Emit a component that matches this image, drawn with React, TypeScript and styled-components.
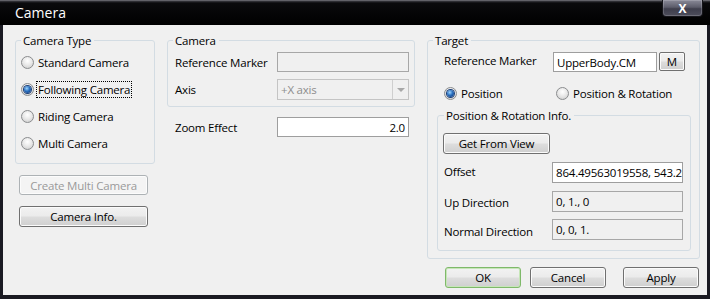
import React from 'react';
import styled, { createGlobalStyle, css } from 'styled-components';

const Global = createGlobalStyle`
  html, body { margin: 0; padding: 0; background: #16161c; }
  body { font-family: "Open Sans", "Noto Sans", sans-serif; font-size: 11.5px; letter-spacing: -0.2px; color: #000; }
  * { box-sizing: border-box; }
`;

const Window = styled.div`
  width: 710px;
  height: 299px;
  background: #1a1a22;
  display: flex;
  flex-direction: column;
  overflow: hidden;
`;

const TitleBar = styled.div`
  height: 25px;
  flex: none;
  display: flex;
  align-items: flex-start;
  justify-content: space-between;
  padding: 0 7px 0 15px;
  background: linear-gradient(#8a8a90 0, #3a3a40 1px, #0a0a0c 3px, #000 100%);
`;

const Title = styled.span`
  color: #fff;
  font-size: 14px;
  letter-spacing: 0;
  line-height: 16px;
  margin-top: 5px;
`;

const CloseBtn = styled.div`
  width: 41px;
  height: 17px;
  border: 1px solid #15151a;
  border-top: none;
  border-radius: 0 0 4px 4px;
  background: linear-gradient(#8a8a98 0%, #5c5c6a 45%, #3e3e4c 55%, #4e4e5c 100%);
  box-shadow: inset 0 0 0 1px rgba(255, 255, 255, 0.18);
  color: #fff;
  font-weight: bold;
  font-size: 12px;
  line-height: 15px;
  display: flex;
  align-items: center;
  justify-content: center;
`;

const Client = styled.div`
  flex: 1;
  margin: 0 3px 4px 3px;
  background: #f0f0f0;
  display: flex;
  align-items: flex-start;
  gap: 12px;
  padding: 8px 7px 0 12px;
`;

const Column = styled.div<{ $w: number }>`
  width: ${(p) => p.$w}px;
  flex: none;
  display: flex;
  flex-direction: column;
`;

const Group = styled.fieldset<{ $w: number; $h: number; $pl?: number; $pt?: number }>`
  width: ${(p) => p.$w}px;
  height: ${(p) => p.$h}px;
  margin: 0;
  padding: ${(p) => p.$pt ?? 0}px 5px 0 ${(p) => p.$pl ?? 7}px;
  border: 1px solid #d3dce3;
  border-radius: 3px;
  min-inline-size: 0;
  display: flex;
  flex-direction: column;
`;

const Legend = styled.legend<{ $ml?: number }>`
  padding: 0 3px 0 2px;
  margin-left: ${(p) => p.$ml ?? 0}px;
  line-height: 15px;
`;

const RadioRow = styled.label<{ $h?: number; $w?: number }>`
  height: ${(p) => p.$h ?? 27}px;
  ${(p) => (p.$w ? `width: ${p.$w}px;` : '')}
  display: flex;
  align-items: center;
  gap: 3px;
  white-space: nowrap;
  flex: none;
`;

const RadioCircle = styled.span<{ $on?: boolean }>`
  width: 13px;
  height: 13px;
  flex: none;
  border-radius: 50%;
  border: 1px solid #8a8c8e;
  background: radial-gradient(circle at 50% 35%, #ffffff 0%, #eaeaea 45%, #c9c9c9 100%);
  display: flex;
  align-items: center;
  justify-content: center;
  ${(p) =>
    p.$on &&
    css`
      &::after {
        content: '';
        width: 7px;
        height: 7px;
        border-radius: 50%;
        background: radial-gradient(circle at 40% 35%, #9fd6ff 0%, #2a70c0 45%, #0a2f6e 100%);
        box-shadow: 0 0 0 1px #1b3f78;
      }
    `}
`;

const RadioText = styled.span<{ $focus?: boolean }>`
  padding: 0 1px;
  ${(p) =>
    p.$focus &&
    css`
      outline: 1px dotted #000;
      outline-offset: 0;
    `}
`;

const Button = styled.button<{ $w: number; $h?: number; $mt?: number; $ml?: number; $default?: boolean }>`
  width: ${(p) => p.$w}px;
  height: ${(p) => p.$h ?? 21}px;
  margin: ${(p) => p.$mt ?? 0}px 0 0 ${(p) => p.$ml ?? 0}px;
  padding: 0;
  font-family: inherit;
  font-size: 11.5px;
  letter-spacing: -0.2px;
  color: #000;
  border: 1px solid ${(p) => (p.$default ? '#7fb96a' : '#707070')};
  border-radius: 3px;
  background: linear-gradient(#f2f2f2 0%, #ebebeb 48%, #dddddd 52%, #cfcfcf 100%);
  box-shadow: inset 0 0 0 1px ${(p) => (p.$default ? '#c6e6b8' : '#fbfbfb')};
  flex: none;
  &:disabled {
    color: #9a9a9a;
    border-color: #adb2b5;
    background: #f4f4f4;
    box-shadow: inset 0 0 0 1px #fcfcfc;
  }
`;

const FieldRow = styled.div<{ $mt?: number; $h?: number; $pl?: number }>`
  display: flex;
  align-items: center;
  height: ${(p) => p.$h ?? 20}px;
  margin-top: ${(p) => p.$mt ?? 0}px;
  padding-left: ${(p) => p.$pl ?? 0}px;
  flex: none;
`;

const Label = styled.span<{ $w: number; $dy?: number }>`
  width: ${(p) => p.$w}px;
  flex: none;
  white-space: nowrap;
  position: relative;
  top: ${(p) => p.$dy ?? 0}px;
`;

const TextBox = styled.div<{ $w: number; $ro?: boolean; $right?: boolean }>`
  width: ${(p) => p.$w}px;
  height: 100%;
  border: 1px solid ${(p) => (p.$ro ? '#a7a7a7' : '#9e9e9e')};
  background: ${(p) => (p.$ro ? '#f0f0f0' : '#fff')};
  padding: 0 3px;
  display: flex;
  align-items: center;
  justify-content: ${(p) => (p.$right ? 'flex-end' : 'flex-start')};
  white-space: nowrap;
  overflow: hidden;
  flex: none;
`;

const Select = styled.div<{ $w: number }>`
  width: ${(p) => p.$w}px;
  height: 100%;
  border: 1px solid #c4c4c4;
  background: #f0f0f0;
  display: flex;
  color: #8d8d8d;
  flex: none;
`;

const SelectText = styled.span`
  flex: 1;
  padding-left: 3px;
  display: flex;
  align-items: center;
`;

const SelectArrow = styled.span`
  width: 16px;
  border-left: 1px solid #cfcfcf;
  display: flex;
  align-items: center;
  justify-content: center;
  &::after {
    content: '';
    border-left: 4px solid transparent;
    border-right: 4px solid transparent;
    border-top: 4px solid #a8a8a8;
  }
`;

const SmallBtn = styled.button`
  width: 26px;
  height: 19px;
  margin-left: 2px;
  align-self: flex-start;
  padding: 0;
  font-family: inherit;
  font-size: 11.5px;
  border: 1px solid #707070;
  border-radius: 2px;
  background: linear-gradient(#f2f2f2 0%, #ebebeb 48%, #dddddd 52%, #cfcfcf 100%);
  box-shadow: inset 0 0 0 1px #fbfbfb;
`;

const ButtonRow = styled.div`
  display: flex;
  margin-top: 8px;
  padding-left: 18px;
`;

const InnerGroup = styled.fieldset`
  width: 254px;
  height: 143px;
  margin: 5px 0 0 -7px;
  padding: 0 5px 0 5px;
  border: 1px solid #d3dce3;
  border-radius: 3px;
  min-inline-size: 0;
  display: flex;
  flex-direction: column;
`;

export default function App() {
  return (
    <>
      <Global />
      <Window>
        <TitleBar>
          <Title>Camera</Title>
          <CloseBtn>X</CloseBtn>
        </TitleBar>
        <Client>
          <Column $w={140}>
            <Group $w={140} $h={131} $pl={5} $pt={1}>
              <Legend $ml={0}>Camera Type</Legend>
              <RadioRow>
                <RadioCircle />
                <RadioText>Standard Camera</RadioText>
              </RadioRow>
              <RadioRow>
                <RadioCircle $on />
                <RadioText $focus>Following Camera</RadioText>
              </RadioRow>
              <RadioRow>
                <RadioCircle />
                <RadioText>Riding Camera</RadioText>
              </RadioRow>
              <RadioRow>
                <RadioCircle />
                <RadioText>Multi Camera</RadioText>
              </RadioRow>
            </Group>
            <Button $w={129} $h={20} $mt={11} $ml={4} disabled>
              Create Multi Camera
            </Button>
            <Button $w={129} $h={21} $mt={11} $ml={4}>
              Camera Info.
            </Button>
          </Column>

          <Column $w={248}>
            <Group $w={248} $h={74} $pt={4}>
              <Legend $ml={-2}>Camera</Legend>
              <FieldRow>
                <Label $w={102}>Reference Marker</Label>
                <TextBox $w={132} $ro />
              </FieldRow>
              <FieldRow $mt={7} $h={21}>
                <Label $w={102}>Axis</Label>
                <Select $w={132}>
                  <SelectText>+X axis</SelectText>
                  <SelectArrow />
                </Select>
              </FieldRow>
            </Group>
            <FieldRow $mt={10} $pl={8}>
              <Label $w={102}>Zoom Effect</Label>
              <TextBox $w={132} $right>
                2.0
              </TextBox>
            </FieldRow>
          </Column>

          <Column $w={273}>
            <Group $w={273} $h={226} $pl={16} $pt={4}>
              <Legend $ml={-11}>Target</Legend>
              <FieldRow>
                <Label $w={109} $dy={-2}>Reference Marker</Label>
                <TextBox $w={104}>UpperBody.CM</TextBox>
                <SmallBtn>M</SmallBtn>
              </FieldRow>
              <FieldRow $mt={11}>
                <RadioRow $h={20} $w={112}>
                  <RadioCircle $on />
                  <RadioText>Position</RadioText>
                </RadioRow>
                <RadioRow $h={20}>
                  <RadioCircle />
                  <RadioText>Position &amp; Rotation</RadioText>
                </RadioRow>
              </FieldRow>
              <InnerGroup>
                <Legend $ml={1}>Position &amp; Rotation Info.</Legend>
                <Button $w={107} $h={21} $mt={10}>
                  Get From View
                </Button>
                <FieldRow $mt={8} $h={21} $pl={1}>
                  <Label $w={108} $dy={-1}>Offset</Label>
                  <TextBox $w={131}>864.49563019558, 543.20000000</TextBox>
                </FieldRow>
                <FieldRow $mt={8} $h={21} $pl={1}>
                  <Label $w={108} $dy={1}>Up Direction</Label>
                  <TextBox $w={131} $ro>
                    0, 1., 0
                  </TextBox>
                </FieldRow>
                <FieldRow $mt={7} $h={21} $pl={1}>
                  <Label $w={108} $dy={2}>Normal Direction</Label>
                  <TextBox $w={131} $ro>
                    0, 0, 1.
                  </TextBox>
                </FieldRow>
              </InnerGroup>
            </Group>
            <ButtonRow>
              <Button $w={76} $default>
                OK
              </Button>
              <Button $w={76} $ml={9}>
                Cancel
              </Button>
              <Button $w={76} $ml={17}>
                Apply
              </Button>
            </ButtonRow>
          </Column>
        </Client>
      </Window>
    </>
  );
}
